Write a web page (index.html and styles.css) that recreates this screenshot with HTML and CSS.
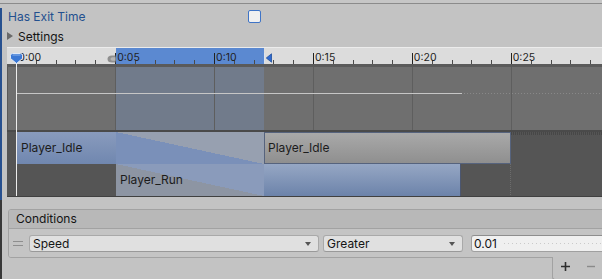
FILE: index.html
```html
<!DOCTYPE html>
<html>
<head>
<meta charset="utf-8">
<link rel="stylesheet" href="styles.css">
</head>
<body>
<div class="topbar"></div>
<div class="field-row">
  <span class="exit-label">Has Exit Time</span>
  <span class="checkbox"></span>
</div>
<div class="foldout"><span class="tri"></span><span>Settings</span></div>

<div class="timeline">
  <div class="ruler">
    <div class="seg"><span>0:00</span></div>
    <div class="seg"><span>0:05</span></div>
    <div class="seg"><span>0:10</span></div>
    <div class="seg"><span>0:15</span></div>
    <div class="seg"><span>0:20</span></div>
    <div class="seg"><span>0:25</span></div>
  </div>
  <div class="track">
    <div class="curve"></div>
  </div>
  <div class="sep"></div>
  <div class="clip-row">
    <div class="gap gap-a"></div>
    <div class="clip clip-idle-blue">Player_Idle</div>
    <div class="clip clip-idle-grey">Player_Idle</div>
    <div class="rest rest-a"></div>
  </div>
  <div class="clip-row row-last">
    <div class="gap gap-b"></div>
    <div class="clip clip-run">Player_Run</div>
    <div class="rest rest-b"></div>
  </div>

  <svg class="sel-start" width="9" height="8" viewBox="0 0 9 8"><path d="M8.5 0.5 H5 A4.5 3.5 0 0 0 5 7.5 H8.5 Z" fill="#8f8f8f"/><path d="M8.5 2.2 H5.5 A2 1.8 0 0 0 5.5 5.8 H8.5 Z" fill="#b4b4b4"/></svg>
  <svg class="sel-end" width="8" height="10" viewBox="0 0 8 10"><rect x="0" y="0" width="1" height="10" fill="#dbe3ef"/><path d="M7.5 0.8 L2.3 5 L7.5 9.2 Z" fill="#2f6ad0" stroke="#1f4f9c" stroke-width="0.8"/></svg>

  <div class="cursor">
    <svg width="13" height="11" viewBox="0 0 13 11"><path d="M2.5 .5h8a2 2 0 0 1 2 2v3L6.5 10.5 .5 5.5v-3a2 2 0 0 1 2-2z" fill="#3b78d4" stroke="#dfe8f6"/><path d="M2.5 2h8" stroke="#8fb4ea" stroke-width="1"/></svg>
  </div>
</div>

<div class="cond-wrap">
  <div class="cond-box">
    <div class="cond-head">Conditions</div>
    <div class="cond-row">
      <span class="handle"></span>
      <div class="dropdown dd-param"><span>Speed</span><i class="arrow"></i></div>
      <div class="dropdown dd-mode"><span>Greater</span><i class="arrow"></i></div>
      <div class="numfield">0.01</div>
    </div>
  </div>
  <div class="cond-footer">
    <svg class="plus" width="9" height="9" viewBox="0 0 9 9"><path d="M4.5 0v9M0 4.5h9" stroke="#2e2e2e" stroke-width="1.6"/></svg>
    <svg class="minus" width="8" height="9" viewBox="0 0 8 9"><path d="M0 4.5h8" stroke="#8a8a8a" stroke-width="1.4"/></svg>
  </div>
</div>
</body>
</html>
```

FILE: styles.css
```css
* { box-sizing: border-box; }
html, body { margin: 0; padding: 0; }
body {
  width: 602px;
  height: 279px;
  overflow: hidden;
  font-family: Inter, "Noto Sans", sans-serif;
  font-size: 12px;
  color: #141414;
  background:
    linear-gradient(#27508f, #27508f) 0 8px / 2px 192px no-repeat,
    linear-gradient(#383838, #383838) 0 200px / 2px 100% no-repeat,
    #c3c3c3;
}

.topbar {
  height: 4px;
  background: #c6c6c6;
  border-bottom: 1px solid #8b8b8b;
}

.field-row {
  display: flex;
  align-items: center;
  height: 17px;
  margin-top: 4px;
}
.exit-label {
  width: 248px;
  padding-left: 8px;
  color: #23508f;
}
.checkbox {
  width: 13px;
  height: 13px;
  border: 1px solid #3f74c6;
  border-radius: 2px;
  background: #f0f0f0;
}

.foldout {
  display: flex;
  align-items: center;
  height: 18px;
  margin-top: 2px;
}
.tri {
  width: 0;
  height: 0;
  margin-left: 7px;
  margin-right: 5px;
  border-left: 6px solid #6a6a6a;
  border-top: 4.5px solid transparent;
  border-bottom: 4.5px solid transparent;
}

/* ---------- timeline ---------- */
.timeline {
  position: relative;
  margin: 2px 0 0 7px;
  width: 595px;
  overflow: hidden;
}
.ruler {
  display: flex;
  height: 17px;
  padding-left: 9.3px;
  background:
    linear-gradient(#ececec, #ececec) 0 0 / 100% 1px no-repeat,
    linear-gradient(to right, transparent 109px, #5b89d1 109px 257px, transparent 257px),
    #dcdcdc;
}
.seg {
  flex: 0 0 98.9px;
  height: 17px;
  padding: 4px 0 0 2px;
  font-size: 10.5px;
  line-height: 13px;
  color: #222;
  white-space: nowrap;
  background:
    linear-gradient(#222, #222) 0 6px / 1px 11px no-repeat,
    repeating-linear-gradient(to right, #4a4a4a 0 1px, transparent 1px 19.78px) 0 13px / 100% 4px no-repeat;
}

.track {
  height: 66px;
  padding: 29px 0 0 10px;
  background:
    linear-gradient(#5a5a5a, #5a5a5a) 0 0 / 100% 3px no-repeat,
    linear-gradient(#585858, #585858) 0 0 / 1px 100% no-repeat,
    repeating-linear-gradient(to right, #5e5e5e 0 1px, transparent 1px 98.9px) 9.3px 0 / 100% 100% no-repeat,
    linear-gradient(to right, transparent 109px, #717b8b 109px 257px, transparent 257px),
    #6f6f6f;
}
.curve {
  height: 1px;
  background:
    linear-gradient(to right, #c6c6c6 445px, transparent 445px),
    repeating-linear-gradient(to right, #888 0 1px, transparent 1px 3px);
}
.sep {
  height: 2px;
  background: #4a4a4a;
}

.clip-row {
  display: flex;
  height: 32px;
}
.row-last {
  height: 33px;
  border-bottom: 1px solid #404040;
}
.gap, .rest { background: #555; }
.gap-a { width: 10px; }
.gap-b { width: 109px; }
.rest { flex: 1; }
.rest-a {
  background:
    repeating-linear-gradient(to right, #474747 0 1px, transparent 1px 2px) 0 0 / 100% 3px no-repeat,
    #555;
}
.rest-b {
  background:
    repeating-linear-gradient(to bottom, #6c6c6c 0 1px, transparent 1px 2px) 49px 0 / 1px 100% no-repeat,
    #555;
}

.clip {
  padding-left: 4px;
  line-height: 32px;
  font-size: 12px;
  color: #1c1c1c;
  white-space: nowrap;
}
.clip-idle-blue {
  width: 247px;
  background:
    linear-gradient(to top right, #7a90b9 50%, #97a0b0 50%) 99px 0 / 148px 100% no-repeat,
    linear-gradient(#899bbd, #7087af);
}
.clip-idle-grey {
  width: 247px;
  border: 1px solid #56637d;
  padding-left: 3px;
  line-height: 30px;
  background: linear-gradient(#a9a9a9, #8f8f8f);
}
.clip-run {
  width: 345px;
  border-right: 1px solid #4b5670;
  background:
    linear-gradient(to top right, #8d95a3 50%, #8a9bbb 50%) 0 0 / 148px 100% no-repeat,
    linear-gradient(#96a7c4, #6c83aa);
}

.cursor {
  position: absolute;
  left: 3px;
  top: 6px;
  bottom: 1px;
  width: 13px;
}
.cursor::before {
  content: "";
  position: absolute;
  left: 6px;
  top: 9px;
  bottom: 0;
  width: 1px;
  background: #ededed;
}
.cursor svg {
  position: relative;
  display: block;
}
.sel-start {
  position: absolute;
  left: 100px;
  top: 8px;
}
.sel-end {
  position: absolute;
  left: 257px;
  top: 6px;
}

/* ---------- conditions ---------- */
.cond-wrap {
  margin: 12px 0 0 8px;
  width: 610px;
}
.cond-box {
  border: 1px solid #a2a2a2;
  border-radius: 3px;
  overflow: hidden;
}
.cond-head {
  height: 19px;
  line-height: 18px;
  padding-left: 7px;
  background: #b8b8b8;
  border-bottom: 1px solid #a2a2a2;
}
.cond-row {
  display: flex;
  align-items: flex-start;
  height: 28px;
  padding-top: 6px;
  background: #c4c4c4;
}
.handle {
  width: 10px;
  height: 5px;
  margin: 6px 6px 0 4px;
  border-top: 1px solid #8e8e8e;
  border-bottom: 1px solid #8e8e8e;
}
.dropdown {
  display: flex;
  align-items: center;
  justify-content: space-between;
  height: 17px;
  padding: 0 7px 0 3px;
  border: 1px solid #a9a9a9;
  border-bottom-color: #999;
  border-radius: 3px;
  background: #e0e0e0;
}
.dd-param { width: 290px; margin-right: 4px; }
.dd-mode { width: 140px; margin-right: 8px; }
.arrow {
  width: 0;
  height: 0;
  border-top: 4px solid #555;
  border-left: 3.5px solid transparent;
  border-right: 3.5px solid transparent;
}
.numfield {
  flex: 1;
  height: 17px;
  padding-left: 2px;
  line-height: 15px;
  border: 1px solid #a0a0a0;
  border-top-color: #8e8e8e;
  border-radius: 3px 0 0 3px;
  background:
    repeating-linear-gradient(to right, #cacaca 0 1px, transparent 1px 4px) 32px 7px / 100% 1px no-repeat,
    #f0f0f0;
}
.cond-footer {
  display: flex;
  align-items: flex-start;
  gap: 17px;
  margin: -1px 0 0 auto;
  width: 66px;
  height: 23px;
  padding: 5px 0 0 8px;
  border-left: 1px solid #a2a2a2;
  border-bottom: 1px solid #a2a2a2;
  border-radius: 0 0 0 3px;
  background: #c3c3c3;
}
.cond-footer svg { display: block; }
```
